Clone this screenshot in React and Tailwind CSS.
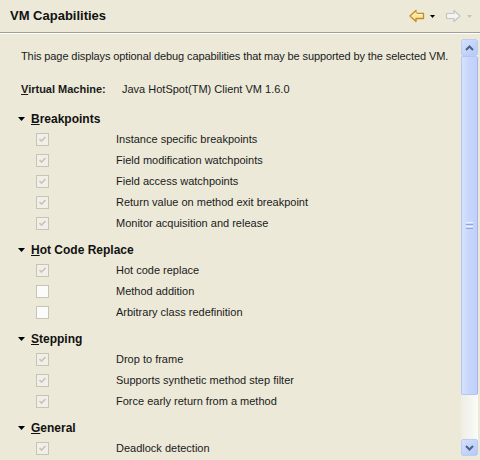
import React from 'react'

const SECTIONS = [
  {
    key: 'B',
    rest: 'reakpoints',
    items: [
      { label: 'Instance specific breakpoints', checked: true },
      { label: 'Field modification watchpoints', checked: true },
      { label: 'Field access watchpoints', checked: true },
      { label: 'Return value on method exit breakpoint', checked: true },
      { label: 'Monitor acquisition and release', checked: true },
    ],
  },
  {
    key: 'H',
    rest: 'ot Code Replace',
    items: [
      { label: 'Hot code replace', checked: true },
      { label: 'Method addition', checked: false },
      { label: 'Arbitrary class redefinition', checked: false },
    ],
  },
  {
    key: 'S',
    rest: 'tepping',
    items: [
      { label: 'Drop to frame', checked: true },
      { label: 'Supports synthetic method step filter', checked: true },
      { label: 'Force early return from a method', checked: true },
    ],
  },
  {
    key: 'G',
    rest: 'eneral',
    items: [{ label: 'Deadlock detection', checked: true }],
  },
]

function BackArrow() {
  return (
    <svg width="16" height="14" viewBox="0 0 16 14">
      <path
        d="M1 7 L7 1.5 L7 4.5 L14.5 4.5 L14.5 9.5 L7 9.5 L7 12.5 Z"
        fill="#fde7a0"
        stroke="#c98a1c"
        strokeWidth="1.3"
        strokeLinejoin="round"
      />
      <path d="M3 7 L7 3.5 L7 5.5 L13.5 5.5" fill="none" stroke="#fff6d4" strokeWidth="1" />
    </svg>
  )
}

function ForwardArrow() {
  return (
    <svg width="16" height="14" viewBox="0 0 16 14">
      <path
        d="M15 7 L9 1.5 L9 4.5 L1.5 4.5 L1.5 9.5 L9 9.5 L9 12.5 Z"
        fill="#f4f4f2"
        stroke="#c4c4c0"
        strokeWidth="1.2"
        strokeLinejoin="round"
      />
    </svg>
  )
}

function Drop({ color }) {
  return (
    <svg width="5" height="3" viewBox="0 0 5 3">
      <path d="M0 0 L5 0 L2.5 3 Z" fill={color} />
    </svg>
  )
}

function Check({ checked }) {
  return (
    <div
      className={`w-[13px] h-[13px] border border-[#c6c4b8] flex items-center justify-center ${
        checked ? 'bg-[#f1efe7]' : 'bg-[#fbfbf9]'
      }`}
    >
      {checked && (
        <svg width="9" height="9" viewBox="0 0 9 9">
          <path d="M1.5 4 L3.5 6 L7.5 2" fill="none" stroke="#c6c4b8" strokeWidth="1.6" />
        </svg>
      )}
    </div>
  )
}

function ScrollButton({ up }) {
  return (
    <div className="h-[17px] w-[17px] rounded-[2px] border border-[#bccdf5] bg-gradient-to-br from-[#d4e0fd] to-[#b5c9f7] flex items-center justify-center">
      <svg width="9" height="6" viewBox="0 0 9 6">
        <path
          d={up ? 'M1 5 L4.5 1.5 L8 5' : 'M1 1 L4.5 4.5 L8 1'}
          fill="none"
          stroke="#4d6185"
          strokeWidth="2"
        />
      </svg>
    </div>
  )
}

function Scrollbar() {
  return (
    <div className="w-[17px] mt-[5px] mb-[4px] flex flex-col bg-gradient-to-r from-[#eeede5] to-[#fbfbf8]">
      <ScrollButton up />
      <div className="h-[339px] rounded-[2px] border border-[#b4c6f3] border-r-[#a3b7e8] bg-gradient-to-r from-[#d7e2fe] via-[#c6d5fc] to-[#bfd0fa] flex items-center justify-center">
        <div className="flex flex-col gap-[1px]">
          <div className="w-[7px] h-[1px] bg-[#eef3ff]" />
          <div className="w-[7px] h-[1px] bg-[#8da6e0]" />
          <div className="w-[7px] h-[1px] bg-[#eef3ff]" />
          <div className="w-[7px] h-[1px] bg-[#8da6e0]" />
        </div>
      </div>
      <div className="flex-1" />
      <ScrollButton />
    </div>
  )
}

export default function App() {
  return (
    <div
      className="w-[480px] h-[460px] bg-[#ece9d8] overflow-hidden flex flex-col text-black"
      style={{ fontFamily: '"Liberation Sans", Arial, sans-serif' }}
    >
      {/* Header */}
      <div className="h-[32px] flex items-center justify-between pl-[10px] pr-[8px]">
        <span className="text-[13px] font-bold text-[#111]">VM Capabilities</span>
        <div className="flex items-center">
          <BackArrow />
          <span className="ml-[5px] mr-[10px] flex"><Drop color="#000" /></span>
          <ForwardArrow />
          <span className="ml-[6px] flex"><Drop color="#c4c4c0" /></span>
        </div>
      </div>
      <div className="h-[1px] bg-[#a0a09a]" />
      <div className="h-[1px] bg-white" />

      {/* Body */}
      <div className="flex-1 flex min-h-0 pr-[2px]">
        <div className="flex-1 overflow-hidden flex flex-col text-[11px] text-[#1a1a1a]">
          <div className="h-[16px] mt-[14px] pl-[21px] flex items-center tracking-[-0.1px]">
            This page displays optional debug capabilities that may be supported by the selected VM.
          </div>
          <div className="h-[16px] mt-[17px] pl-[21px] flex items-center">
            <span className="font-bold w-[101px]">
              <span className="underline">V</span>irtual Machine:
            </span>
            <span>Java HotSpot(TM) Client VM 1.6.0</span>
          </div>
          <div className="mt-[6px] flex flex-col">
            {SECTIONS.map((s) => (
              <div key={s.key} className="mt-[5px] flex flex-col">
                <div className="h-[21px] flex items-center pl-[18px]">
                  <svg width="7" height="4" viewBox="0 0 7 4">
                    <path d="M0 0 L7 0 L3.5 4 Z" fill="#000" />
                  </svg>
                  <span className="ml-[6px] font-bold text-[12px] text-[#111]">
                    <span className="underline">{s.key}</span>
                    {s.rest}
                  </span>
                </div>
                {s.items.map((it) => (
                  <div key={it.label} className="h-[21px] flex items-center">
                    <div className="w-[116px] pl-[36px] flex">
                      <Check checked={it.checked} />
                    </div>
                    <span>{it.label}</span>
                  </div>
                ))}
              </div>
            ))}
          </div>
        </div>
        <Scrollbar />
      </div>
    </div>
  )
}
